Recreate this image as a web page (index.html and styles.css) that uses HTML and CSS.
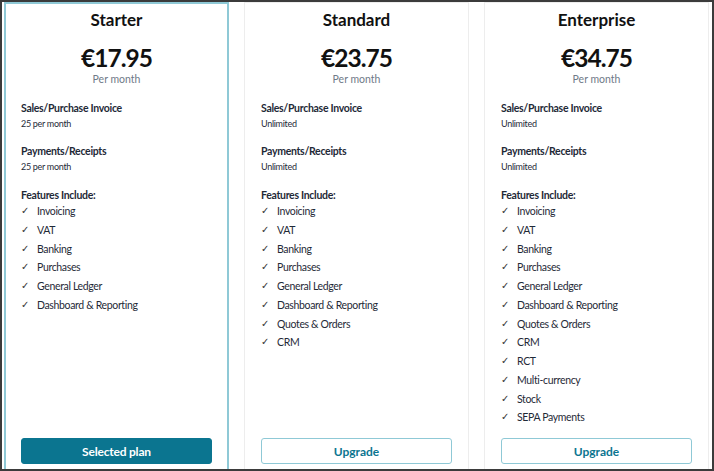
FILE: index.html
```html
<!DOCTYPE html>
<html>
	<head>
		<meta name="viewport" content="width=device-width, initial-scale=1">
		<meta charset="UTF-8">
		<title>Plans</title>
		<link rel="stylesheet" href="styles.css">
	</head>
	<body>
		<div class="frame">
			<div class="plans">

				<div class="plan selected">
					<h2 class="plan-name">Starter</h2>
					<div class="plan-price">€17.95</div>
					<div class="plan-period">Per month</div>

					<div class="limit">
						<h3>Sales/Purchase Invoice</h3>
						<p>25 per month</p>
					</div>
					<div class="limit">
						<h3>Payments/Receipts</h3>
						<p>25 per month</p>
					</div>

					<h3 class="features-title">Features Include:</h3>
					<ul class="features">
						<li>Invoicing</li>
						<li>VAT</li>
						<li>Banking</li>
						<li>Purchases</li>
						<li>General Ledger</li>
						<li>Dashboard &amp; Reporting</li>
					</ul>

					<button class="plan-button current">Selected plan</button>
				</div>

				<div class="plan">
					<h2 class="plan-name">Standard</h2>
					<div class="plan-price">€23.75</div>
					<div class="plan-period">Per month</div>

					<div class="limit">
						<h3>Sales/Purchase Invoice</h3>
						<p>Unlimited</p>
					</div>
					<div class="limit">
						<h3>Payments/Receipts</h3>
						<p>Unlimited</p>
					</div>

					<h3 class="features-title">Features Include:</h3>
					<ul class="features">
						<li>Invoicing</li>
						<li>VAT</li>
						<li>Banking</li>
						<li>Purchases</li>
						<li>General Ledger</li>
						<li>Dashboard &amp; Reporting</li>
						<li>Quotes &amp; Orders</li>
						<li>CRM</li>
					</ul>

					<button class="plan-button">Upgrade</button>
				</div>

				<div class="plan">
					<h2 class="plan-name">Enterprise</h2>
					<div class="plan-price">€34.75</div>
					<div class="plan-period">Per month</div>

					<div class="limit">
						<h3>Sales/Purchase Invoice</h3>
						<p>Unlimited</p>
					</div>
					<div class="limit">
						<h3>Payments/Receipts</h3>
						<p>Unlimited</p>
					</div>

					<h3 class="features-title">Features Include:</h3>
					<ul class="features">
						<li>Invoicing</li>
						<li>VAT</li>
						<li>Banking</li>
						<li>Purchases</li>
						<li>General Ledger</li>
						<li>Dashboard &amp; Reporting</li>
						<li>Quotes &amp; Orders</li>
						<li>CRM</li>
						<li>RCT</li>
						<li>Multi-currency</li>
						<li>Stock</li>
						<li>SEPA Payments</li>
					</ul>

					<button class="plan-button">Upgrade</button>
				</div>

			</div>
		</div>
	</body>
</html>
```

FILE: styles.css
```css
:root {
	--teal: #0b7590;
	--teal-light: #8fc9d6;
	--ink: #1f2a37;
}
* {
	box-sizing: border-box;
	margin: 0;
	padding: 0;
	font-family: Lato, "Open Sans", sans-serif;
}
html, body {
	height: 100%;
	background: #fff;
}
.frame {
	width: 714px;
	height: 471px;
	border: 2px solid #3b3b3b;
	overflow: hidden;
	padding: 0 3px 0 2px;
}
.plans {
	display: grid;
	grid-template-columns: repeat(3, 1fr);
	gap: 15px;
	height: 474px;
}
.plan {
	display: flex;
	flex-direction: column;
	border: 1px solid #ededed;
	padding: 6px 16px 11px;
	color: var(--ink);
}
.plan.selected {
	border: 2px solid var(--teal-light);
	padding: 5px 15px 10px;
}
.plan-name {
	font-size: 17px;
	line-height: 20px;
	font-weight: 700;
	text-align: center;
	color: #111;
	margin-top: 1px;
}
.plan-price {
	font-size: 24.5px;
	line-height: 30px;
	font-weight: 700;
	letter-spacing: -1px;
	text-align: center;
	color: #111;
	margin-top: 13px;
}
.plan-period {
	font-size: 10.5px;
	line-height: 14px;
	text-align: center;
	color: #6f7a88;
	margin-top: -1px;
}
.limit {
	margin-top: 14px;
}
.limit + .limit {
	margin-top: 12px;
}
.limit h3, .features-title {
	font-size: 10.5px;
	line-height: 16px;
	font-weight: 700;
	letter-spacing: -0.3px;
}
.limit p {
	font-size: 9px;
	line-height: 14px;
	letter-spacing: -0.3px;
	margin-top: 1px;
}
.features-title {
	margin-top: 13px;
}
.features {
	list-style: none;
	margin-top: -1px;
}
.features li {
	display: flex;
	font-size: 10.5px;
	line-height: 18.75px;
	letter-spacing: -0.35px;
}
.features li::before {
	content: "✓";
	width: 16px;
	font-size: 10px;
	font-family: "DejaVu Sans", sans-serif;
	color: #333;
}
.plan-button {
	margin-top: auto;
	width: 100%;
	height: 26px;
	border: 1.5px solid var(--teal-light);
	border-radius: 3px;
	background: #fff;
	color: var(--teal);
	font-size: 12px;
	font-weight: 700;
	cursor: pointer;
}
.plan-button.current {
	background: var(--teal);
	border-color: var(--teal);
	color: #fff;
	letter-spacing: -0.2px;
}
```
